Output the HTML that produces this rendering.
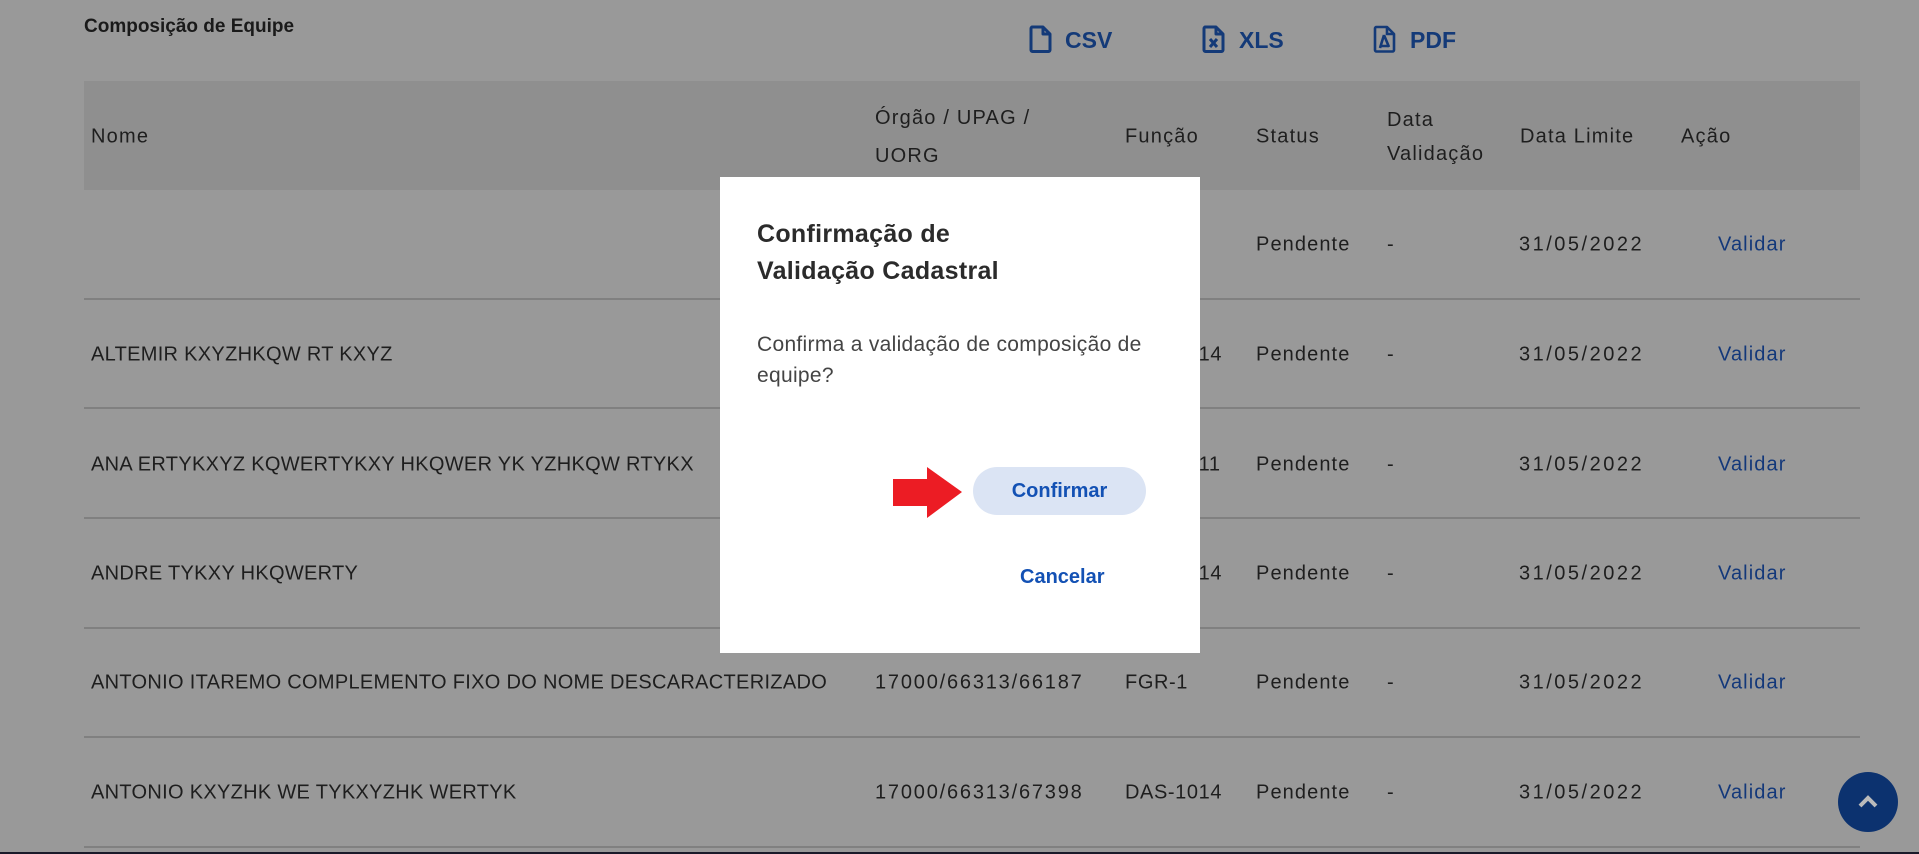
<!DOCTYPE html>
<html><head><meta charset="utf-8">
<style>
*{box-sizing:border-box;margin:0;padding:0}
html,body{width:1919px;height:854px;overflow:hidden;background:#999;font-family:"Liberation Sans",sans-serif;color:#1e1e1e}
.abs{position:absolute}
.t{font-size:20px;white-space:nowrap;transform:translateY(-50%)}
.h{letter-spacing:1.2px}
.line{position:absolute;left:84px;width:1776px;height:2px;background:#808080}
.dl{color:#143a78;font-weight:bold;font-size:23px}
</style></head><body>
<div class="abs" style="left:84px;top:16px;font-size:19px;font-weight:bold;color:#1a1a1a">Composição de Equipe</div>

<svg class="abs" style="left:1029px;top:25px" width="24" height="28" viewBox="0 0 24 28"><path d="M3 2h11l7 7v16a1.5 1.5 0 0 1-1.5 1.5h-16A1.5 1.5 0 0 1 2 25V3.5A1.5 1.5 0 0 1 3.5 2zM14 2v7h7" fill="none" stroke="#143a78" stroke-width="3" stroke-linejoin="round"/></svg>
<div class="abs dl" style="left:1065px;top:27px">CSV</div>
<svg class="abs" style="left:1202px;top:25px" width="24" height="28" viewBox="0 0 24 28"><path d="M3 2h11l7 7v16a1.5 1.5 0 0 1-1.5 1.5h-16A1.5 1.5 0 0 1 2 25V3.5A1.5 1.5 0 0 1 3.5 2zM14 2v7h7M8 14l7 8M15 14l-7 8" fill="none" stroke="#143a78" stroke-width="3" stroke-linejoin="round"/></svg>
<div class="abs dl" style="left:1239px;top:27px">XLS</div>
<svg class="abs" style="left:1373px;top:25px" width="24" height="28" viewBox="0 0 24 28"><path d="M3 2h11l7 7v16a1.5 1.5 0 0 1-1.5 1.5h-16A1.5 1.5 0 0 1 2 25V3.5A1.5 1.5 0 0 1 3.5 2zM14 2v7h7M11 10l-4 13M11 10l5 12M7 21h9" fill="none" stroke="#143a78" stroke-width="2.6" stroke-linejoin="round"/></svg>
<div class="abs dl" style="left:1410px;top:27px">PDF</div>

<div class="abs" style="left:84px;top:81px;width:1776px;height:109px;background:#8f8f8f"></div>
<div class="abs t h" style="left:91px;top:137px">Nome</div>
<div class="abs t h" style="left:875px;top:137px;line-height:38px;white-space:normal;width:200px">Órgão / UPAG /<br>UORG</div>
<div class="abs t h" style="left:1125px;top:137px">Função</div>
<div class="abs t h" style="left:1256px;top:137px">Status</div>
<div class="abs t h" style="left:1387px;top:137px;line-height:34px;white-space:normal">Data<br>Validação</div>
<div class="abs t h" style="left:1520px;top:137px">Data Limite</div>
<div class="abs t h" style="left:1681px;top:137px">Ação</div>

<div class="line" style="top:298px"></div>
<div class="line" style="top:407px"></div>
<div class="line" style="top:517px"></div>
<div class="line" style="top:627px"></div>
<div class="line" style="top:736px"></div>
<div class="line" style="top:846px"></div>

<div id="rows"></div>
<script>
var r=[[245,"","",""],[355,"ALTEMIR KXYZHKQW RT KXYZ","17000/66313/66114","DAS-1014"],[465,"ANA ERTYKXYZ KQWERTYKXY HKQWER YK YZHKQW RTYKX","17000/66313/66111","DAS-1011"],[574,"ANDRE TYKXY HKQWERTY","17000/66313/66114","DAS-1014"],[683,"ANTONIO ITAREMO COMPLEMENTO FIXO DO NOME DESCARACTERIZADO","17000/66313/66187","FGR-1"],[793,"ANTONIO KXYZHK WE TYKXYZHK WERTYK","17000/66313/67398","DAS-1014"]];
var h="";r.forEach(function(x){var y=x[0];
h+='<div class="abs t" style="left:91px;top:'+y+'px;letter-spacing:0.3px">'+x[1]+'</div>';
h+='<div class="abs t" style="left:875px;top:'+y+'px;letter-spacing:1.8px">'+x[2]+'</div>';
h+='<div class="abs t" style="left:1125px;top:'+y+'px;letter-spacing:0.6px">'+x[3]+'</div>';
h+='<div class="abs t" style="left:1256px;top:'+y+'px;letter-spacing:1.1px">Pendente</div>';
h+='<div class="abs t" style="left:1387px;top:'+y+'px">-</div>';
h+='<div class="abs t" style="left:1519px;top:'+y+'px;letter-spacing:2.5px">31/05/2022</div>';
h+='<div class="abs t" style="left:1718px;top:'+y+'px;color:#13387a;letter-spacing:1.1px">Validar</div>';});
document.getElementById("rows").innerHTML=h;
</script>

<div class="abs" style="left:720px;top:177px;width:480px;height:476px;background:#fff">
  <div class="abs" style="left:37px;top:39px;font-size:25px;font-weight:bold;line-height:37px;color:#2b2b2b;letter-spacing:0.3px">Confirmação de<br>Validação Cadastral</div>
  <div class="abs" style="left:37px;top:152px;font-size:21px;line-height:31px;color:#444;width:420px;letter-spacing:0.3px">Confirma a validação de composição de equipe?</div>
  <svg class="abs" style="left:173px;top:290px" width="70" height="52" viewBox="0 0 70 52"><path d="M0 12h34V0l35 25L34 51V39H0z" fill="#ec1c24"/></svg>
  <div class="abs" style="left:253px;top:290px;width:173px;height:48px;border-radius:24px;background:#dbe4f4;color:#1351b4;font-size:20px;font-weight:bold;text-align:center;line-height:48px">Confirmar</div>
  <div class="abs" style="left:300px;top:388px;width:108px;color:#1351b4;font-size:20px;font-weight:bold;line-height:24px">Cancelar</div>
</div>

<div class="abs" style="left:1838px;top:772px;width:60px;height:60px;border-radius:50%;background:#0c326f"></div>
<svg class="abs" style="left:1856px;top:791px" width="24" height="20" viewBox="0 0 24 20"><path d="M4 15l8-8 8 8" fill="none" stroke="#bbb" stroke-width="4"/></svg>
<div class="abs" style="left:0;top:852px;width:1919px;height:2px;background:#1a1a2a"></div>
</body></html>
